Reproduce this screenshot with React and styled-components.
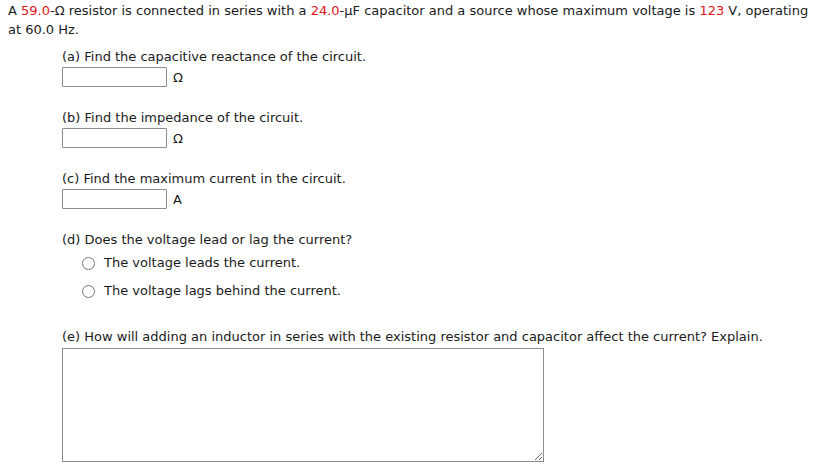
import styled, { createGlobalStyle } from 'styled-components'

const GlobalStyle = createGlobalStyle`
  body {
    margin: 0;
    padding: 0 8px;
    background: #fff;
    font-family: Verdana, 'DejaVu Sans', sans-serif;
    font-size: 13px;
    color: #1a1a1a;
  }
`

const Question = styled.div`
  line-height: 19px;
  padding-top: 1px;
`

const Red = styled.span`
  color: #e0131a;
`

const Parts = styled.div`
  padding-left: 54px;
  margin-top: 8px;
`

const Part = styled.div`
  margin-bottom: ${props => props.gap || 21}px;
`

const Prompt = styled.div`
  line-height: 20px;
`

const AnswerRow = styled.div`
  display: flex;
  align-items: center;
  gap: 6px;
`

const Input = styled.input`
  width: 105px;
  height: 20px;
  box-sizing: border-box;
  border: 1px solid #8c8c8c;
  border-radius: 1px;
  padding: 0 3px;
  font: inherit;
  margin: 0;
`

const Unit = styled.span`
  font-size: 13px;
`

const Options = styled.div`
  padding: 3px 0 0 20px;
  display: flex;
  flex-direction: column;
  gap: 8px;
`

const Option = styled.label`
  display: flex;
  align-items: center;
  gap: 9px;
  line-height: 20px;
`

const Radio = styled.span`
  width: 11px;
  height: 11px;
  border: 1px solid #767676;
  border-radius: 50%;
  flex: none;
`

const TextArea = styled.textarea`
  display: block;
  width: 482px;
  height: 114px;
  box-sizing: border-box;
  border: 1px solid #8c8c8c;
  margin: 1px 0 0;
  font: inherit;
  resize: both;
`

export default function App() {
  return (
    <>
      <GlobalStyle />
      <Question>
        A <Red>59.0</Red>-Ω resistor is connected in series with a <Red>24.0</Red>-µF capacitor and a source whose maximum voltage is <Red>123</Red> V, operating at 60.0 Hz.
      </Question>
      <Parts>
        <Part>
          <Prompt>(a) Find the capacitive reactance of the circuit.</Prompt>
          <AnswerRow><Input /><Unit>Ω</Unit></AnswerRow>
        </Part>
        <Part>
          <Prompt>(b) Find the impedance of the circuit.</Prompt>
          <AnswerRow><Input /><Unit>Ω</Unit></AnswerRow>
        </Part>
        <Part>
          <Prompt>(c) Find the maximum current in the circuit.</Prompt>
          <AnswerRow><Input /><Unit>A</Unit></AnswerRow>
        </Part>
        <Part gap={26}>
          <Prompt>(d) Does the voltage lead or lag the current?</Prompt>
          <Options>
            <Option><Radio />The voltage leads the current.</Option>
            <Option><Radio />The voltage lags behind the current.</Option>
          </Options>
        </Part>
        <Part>
          <Prompt>(e) How will adding an inductor in series with the existing resistor and capacitor affect the current? Explain.</Prompt>
          <TextArea />
        </Part>
      </Parts>
    </>
  )
}
